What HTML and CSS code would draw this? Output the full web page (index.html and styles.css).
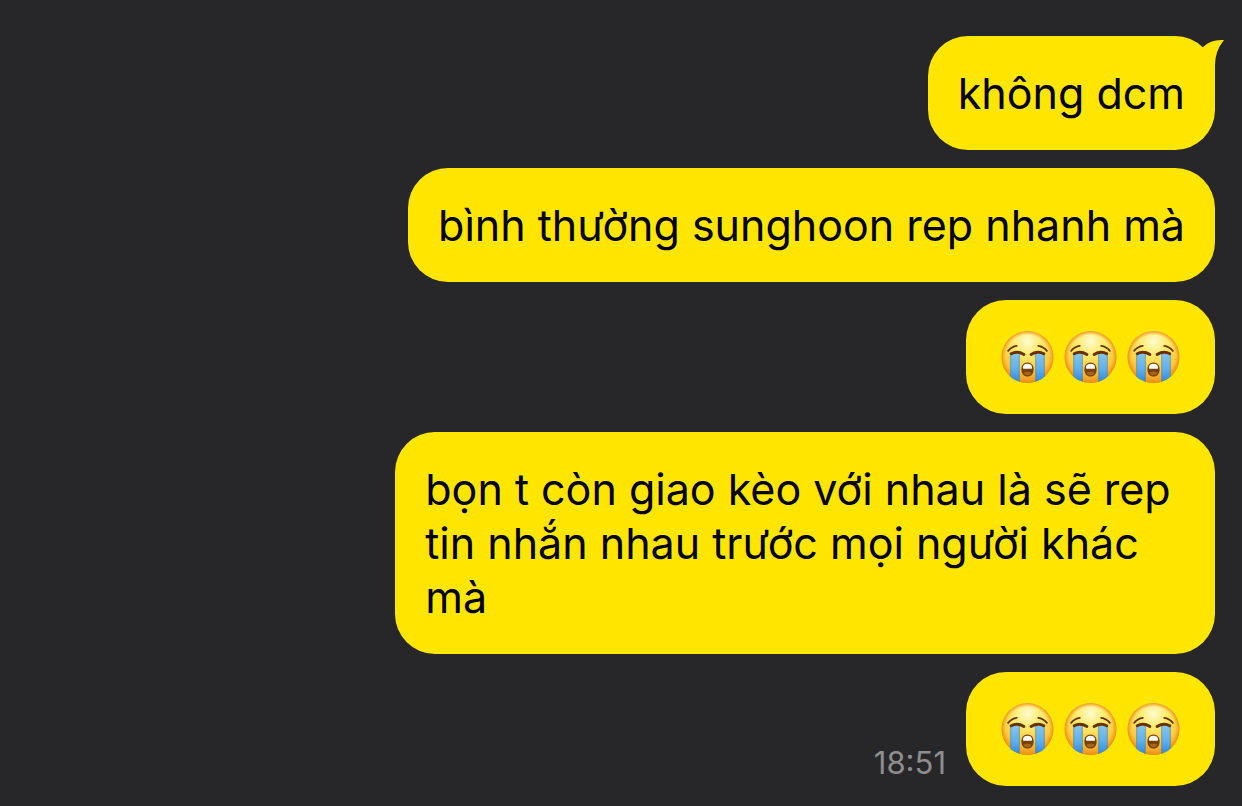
FILE: index.html
```html
<!DOCTYPE html>
<html lang="vi">
<head>
<meta charset="utf-8">
<meta name="viewport" content="width=device-width, initial-scale=1">
<title>Chat</title>
<link rel="stylesheet" href="styles.css">
</head>
<body>
<svg class="defs" aria-hidden="true">
  <defs>
    <radialGradient id="face" cx="0.5" cy="0.2" r="0.82">
      <stop offset="0" stop-color="#fffbd0"/>
      <stop offset="0.3" stop-color="#ffec72"/>
      <stop offset="0.68" stop-color="#fdc93c"/>
      <stop offset="1" stop-color="#f08d1b"/>
    </radialGradient>
    <radialGradient id="rim" cx="0.5" cy="0.5" r="0.5">
      <stop offset="0.84" stop-color="#f29a1c" stop-opacity="0"/>
      <stop offset="1" stop-color="#e8900f" stop-opacity="0.9"/>
    </radialGradient>
    <linearGradient id="tear" x1="0" y1="0" x2="0" y2="1">
      <stop offset="0" stop-color="#86c3e9"/>
      <stop offset="0.5" stop-color="#5fb1ee"/>
      <stop offset="1" stop-color="#2c83d8"/>
    </linearGradient>
    <clipPath id="head"><circle cx="26" cy="26" r="25.5"/></clipPath>
    <symbol id="sob" viewBox="0 0 52 52">
      <circle cx="26" cy="26" r="25.5" fill="url(#face)"/>
      <circle cx="26" cy="26" r="25.5" fill="url(#rim)"/>
      <g clip-path="url(#head)">
        <path d="M9.500 23h8.500v29h-8.500zM34 23h8.500v29h-8.500z" fill="url(#tear)"/>
        <path d="M9.500 23v29M18 23v29M34 23v29M42.500 23v29" stroke="#3a7fa8" stroke-width="0.8" stroke-opacity="0.7" fill="none"/>
      </g>
      <g fill="none" stroke="#643206" stroke-linecap="round">
        <path d="M7 20Q10.500 15.500 15.500 15M36.500 15Q41.500 15.500 45 20" stroke-width="1.700"/>
        <path d="M10 22.800Q16 19.500 22.500 23.500M29.500 23.500Q36 19.500 42 22.800" stroke-width="2.800"/>
      </g>
      <path d="M26 31.500c3.900 0 6 3 6 6.800 0 4.200-2.200 6.900-6 6.900s-6-2.700-6-6.900c0-3.800 2.100-6.800 6-6.800z" fill="#76420a"/>
      <path d="M21.500 36.500c0-2.600 1.700-3.900 4.500-3.900s4.500 1.300 4.500 3.900c0 .7-.4 1-1 1h-7c-.6 0-1-.3-1-1z" fill="#fff"/>
      <path d="M22 41.500c2-1.400 6-1.400 8 0-.8 1.700-2.200 2.500-4 2.500s-3.200-.8-4-2.500z" fill="#a76515"/>
    </symbol>
  </defs>
</svg>
<main class="chat">
  <div class="message">
    <p class="bubble">không dcm<svg class="tail" viewBox="0 0 24 40" aria-hidden="true"><path d="M0 12L2 8Q10 0 23 1Q14 12 14 26V38L0 24z"/></svg></p>
  </div>
  <div class="message">
    <p class="bubble">bình thường sunghoon rep nhanh mà</p>
  </div>
  <div class="message">
    <div class="bubble bubble-emoji" role="img" aria-label="😭😭😭">
      <svg class="emoji"><use href="#sob"/></svg>
      <svg class="emoji"><use href="#sob"/></svg>
      <svg class="emoji"><use href="#sob"/></svg>
    </div>
  </div>
  <div class="message">
    <p class="bubble">bọn t còn giao kèo với nhau là sẽ rep tin nhắn nhau trước mọi người khác mà</p>
  </div>
  <div class="message">
    <time class="time" datetime="18:51">18:51</time>
    <div class="bubble bubble-emoji" role="img" aria-label="😭😭😭">
      <svg class="emoji"><use href="#sob"/></svg>
      <svg class="emoji"><use href="#sob"/></svg>
      <svg class="emoji"><use href="#sob"/></svg>
    </div>
  </div>
</main>
</body>
</html>
```
FILE: styles.css
```css
* {
  box-sizing: border-box;
}

body {
  margin: 0;
  background: #272729;
  color: #000;
  font-family: Inter, "Noto Sans", sans-serif;
}

.defs {
  position: absolute;
  width: 0;
  height: 0;
}

.chat {
  display: flex;
  flex-direction: column;
  gap: 18px;
  padding: 36px 27px 20px;
}

.message {
  display: flex;
  justify-content: flex-end;
  align-items: flex-end;
  gap: 20px;
}

.bubble {
  position: relative;
  max-width: 69%;
  margin: 0;
  padding: 30px;
  border-radius: 40px;
  background: #ffe600;
  font-size: 43px;
  line-height: 54px;
}

.bubble-emoji {
  display: flex;
  gap: 10px;
  padding: 30px 35px;
}

.emoji {
  width: 53px;
  height: 54px;
}

.tail {
  position: absolute;
  top: 3px;
  right: -10px;
  width: 24px;
  height: 40px;
  fill: #ffe600;
}

.time {
  padding-bottom: 5px;
  color: #8e8e90;
  font-size: 31px;
  line-height: 36px;
}
```
